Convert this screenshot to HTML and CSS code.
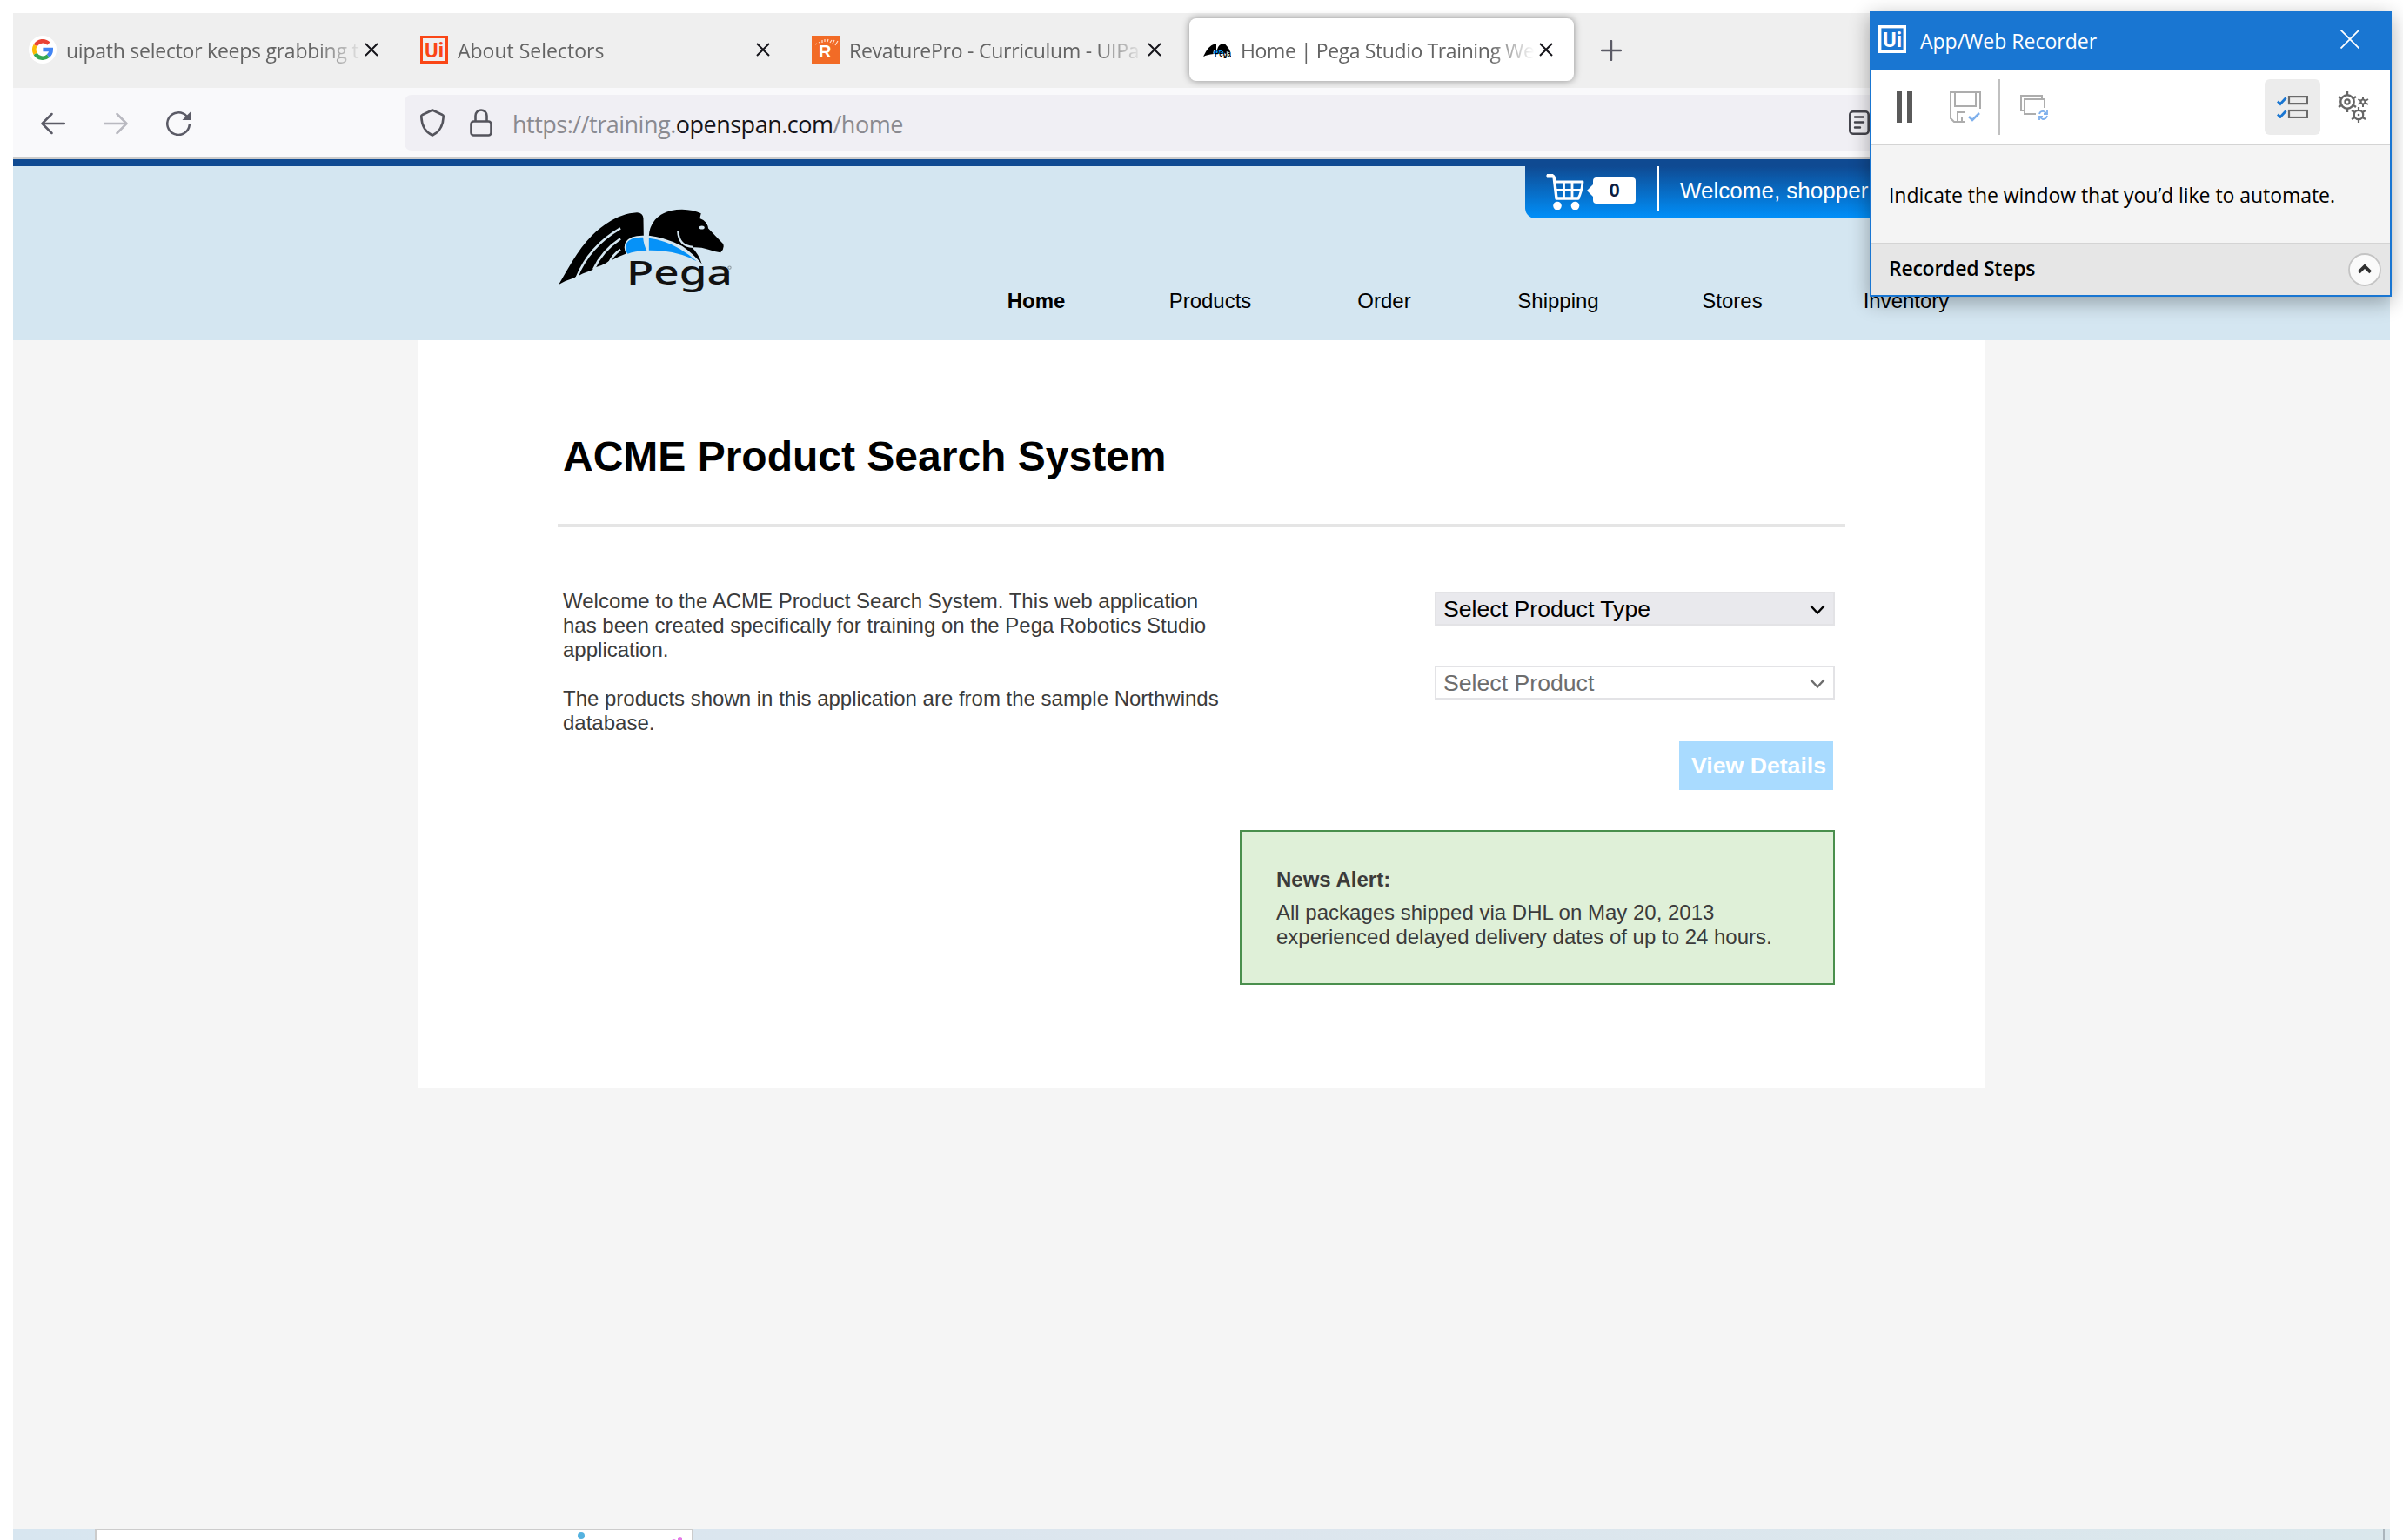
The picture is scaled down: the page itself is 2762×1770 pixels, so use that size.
FILE: index.html
```html
<!DOCTYPE html>
<html lang="en">
<head>
<meta charset="utf-8">
<title>Home | Pega Studio Training Website</title>
<link rel="stylesheet" href="styles.css">
</head>
<body>
<div class="screen">
  <svg class="defs" width="0" height="0" aria-hidden="true">
    <symbol id="pega-horse" viewBox="66 60 600 290">
      <path d="M66 320C98 268 128 205 180 152C228 104 282 76 335 73Q355 74 357 92L358 152Q312 151 296 174Q287 195 298 214Q275 222 250 236Q236 240 228 247Q212 256 195 260Q180 272 160 278Q148 282 137 289Q130 287 120 297Q90 306 66 320Z"/>
      <path d="M128 296Q170 190 278 127M186 268Q215 205 278 163M240 245Q252 218 278 200" fill="none" stroke="#d4e6f1" stroke-width="8"/>
      <path d="M376 152C378 108 412 62 490 62Q530 63 555 76L551 93Q577 102 580 127L631 180Q637 196 622 210Q602 208 580 200Q552 191 524 193Q546 213 558 250Q528 214 490 188Q432 158 376 152Z"/>
      <path d="M476 136Q478 188 528 191" fill="none" stroke="#d4e6f1" stroke-width="7"/>
      <ellipse cx="558" cy="124" rx="9" ry="6" fill="#d4e6f1"/>
      <path d="M356 158Q312 156 299 179Q291 200 303 215Q330 203 369 204Q358 185 356 158ZM376 161Q460 170 540 240Q470 202 376 203Z" fill="#0692f8"/>
    </symbol>
    <symbol id="close" viewBox="0 0 16 16"><path d="M1 1 15 15M15 1 1 15" fill="none" stroke="#15141a" stroke-width="2"/></symbol>
  </svg>

  <div class="browser">
    <div class="tabs">
      <div class="tab">
        <svg class="favicon" viewBox="0 0 32 32"><circle cx="16" cy="16" r="16" fill="#fff"/><g fill="none" stroke-width="4.6"><path d="M22.9 9.1A9.7 9.7 0 0 0 7.6 11.2" stroke="#ea4335"/><path d="M7.6 11.2A9.7 9.7 0 0 0 7.6 20.8" stroke="#fbbc05"/><path d="M7.6 20.8A9.7 9.7 0 0 0 22.4 23.3" stroke="#34a853"/><path d="M22.4 23.3A9.7 9.7 0 0 0 25.7 16H16.4" stroke="#4285f4"/></g></svg>
        <span class="tab-title t1">uipath selector keeps grabbing t</span>
        <svg class="tab-close"><use href="#close"/></svg>
      </div>
      <div class="tab">
        <svg class="favicon" viewBox="0 0 32 32"><rect x="1.5" y="1.5" width="29" height="29" fill="none" stroke="#fa4616" stroke-width="3"/><text x="5" y="24.5" class="ui-mark" textLength="22" lengthAdjust="spacingAndGlyphs" fill="#fa4616">Ui</text></svg>
        <span class="tab-title t2">About Selectors</span>
        <svg class="tab-close"><use href="#close"/></svg>
      </div>
      <div class="tab">
        <svg class="favicon" viewBox="0 0 32 32"><rect width="32" height="32" fill="#f26b26"/><path d="M4 10 6 9M8 8l2-1M12 8V5M15 7V4M18 7l1-3M21 8l2-3M24 9l2-4M27 11l3-5" stroke="#ffe2cf" stroke-width="1.2"/><text x="8" y="25" class="r-mark" fill="#fff">R</text></svg>
        <span class="tab-title t3">RevaturePro - Curriculum - UIPa</span>
        <svg class="tab-close"><use href="#close"/></svg>
      </div>
      <div class="tab active">
        <svg class="favicon" viewBox="0 0 32 32"><path d="M0 24Q6 11 13 9.500L15 10V16L12 17Q11 20 12 21Q4 22 0 24ZM16 16Q18 8 25 9.500Q31 16 31 19L26 18V21Q22 17 16 16Z"/><path d="M12 21Q11 17 15 16Q22 16 25 21Z" fill="#0692f8"/><text x="13" y="23.500" class="pega-mini" textLength="19" lengthAdjust="spacingAndGlyphs">Pega</text></svg>
        <span class="tab-title t4">Home | Pega Studio Training We</span>
        <svg class="tab-close"><use href="#close"/></svg>
      </div>
      <svg class="new-tab" viewBox="0 0 24 24"><path d="M12 1V23M1 12H23" fill="none" stroke="#5b5b66" stroke-width="2.4" stroke-linecap="round"/></svg>
    </div>

    <div class="toolbar">
      <div class="nav-buttons">
        <svg viewBox="0 0 28 28"><path d="M27 14H2M12.500 3 1.500 14 12.500 25" fill="none" stroke="#5b5b66" stroke-width="2.500" stroke-linecap="round" stroke-linejoin="round"/></svg>
        <svg viewBox="0 0 28 28"><path d="M1 14H26M15.500 3 26.500 14 15.500 25" fill="none" stroke="#b9b9c0" stroke-width="2.500" stroke-linecap="round" stroke-linejoin="round"/></svg>
        <svg viewBox="0 0 28 28"><path d="M23.500 5.500A12.800 12.800 0 1 0 26.800 15.500" fill="none" stroke="#5b5b66" stroke-width="2.500" stroke-linecap="round"/><path d="M28 0.500V10H18.500Z" fill="#5b5b66"/></svg>
      </div>
      <div class="urlbar">
        <svg class="shield" viewBox="0 0 28 32"><path d="M14 1.500 25.500 7Q27 7.500 26.700 9.500Q26 25 14 30.500Q2 25 1.300 9.500Q1 7.500 2.500 7Z" fill="none" stroke="#54545c" stroke-width="2.600" stroke-linejoin="round"/></svg>
        <svg class="lock" viewBox="0 0 26 32"><path d="M6.500 14V8a6.500 6.500 0 0 1 13 0V14" fill="none" stroke="#54545c" stroke-width="2.600"/><rect x="1.500" y="14.500" width="23" height="16" rx="3" fill="none" stroke="#54545c" stroke-width="2.600"/></svg>
        <span class="url">https://training.<b>openspan.com</b>/home</span>
        <svg class="reader" viewBox="0 0 24 28"><rect x="1.300" y="1.300" width="21.400" height="25.400" rx="3.500" fill="none" stroke="#45454d" stroke-width="2.600"/><path d="M7 7.500H17M7 13.500H17M7 19.500H13" stroke="#45454d" stroke-width="2.400" stroke-linecap="round"/></svg>
      </div>
    </div>

    <header class="site-header">
      <svg class="logo" viewBox="66 60 600 290">
        <use href="#pega-horse" x="66" y="60" width="600" height="290"/>
        <text x="299" y="321" class="pega-word" textLength="364" lengthAdjust="spacingAndGlyphs">Pega</text>
        <circle cx="653" cy="262" r="5" fill="none" stroke="#8b979e" stroke-width="3"/>
      </svg>
      <div class="header-main">
        <div class="account">
          <svg class="cart" viewBox="0 0 44 42"><path d="M2 3H7Q9 3 9.300 6L12 29H37" fill="none" stroke="#fff" stroke-width="3.400" stroke-linecap="round" stroke-linejoin="round"/><path d="M1 1H8V5.500H1Z" fill="#fff"/><path d="M10 10H42Q41 22 37 29M11 19.500H40M20.500 10V29M30 10V29" fill="none" stroke="#fff" stroke-width="2.800" stroke-linejoin="round"/><circle cx="13" cy="37.500" r="4.800" fill="#fff"/><circle cx="33.500" cy="37.500" r="4.800" fill="#fff"/></svg>
          <div class="count"><i></i><span>0</span></div>
          <div class="welcome">Welcome, shopper</div>
        </div>
        <nav class="menu"><a class="current">Home</a><a>Products</a><a>Order</a><a>Shipping</a><a>Stores</a><a>Inventory</a></nav>
      </div>
    </header>

    <main class="page">
      <h1>ACME Product Search System</h1>
      <div class="columns">
        <div class="intro">
          <p>Welcome to the ACME Product Search System. This web application<br>has been created specifically for training on the Pega Robotics Studio<br>application.</p>
          <p>The products shown in this application are from the sample Northwinds<br>database.</p>
        </div>
        <div class="search">
          <div class="select"><span>Select Product Type</span><svg viewBox="0 0 18 12"><path d="M1.500 1.500 9 9.500 16.500 1.500" fill="none" stroke="#000" stroke-width="2.500"/></svg></div>
          <div class="select disabled"><span>Select Product</span><svg viewBox="0 0 18 12"><path d="M1.500 1.500 9 9.500 16.500 1.500" fill="none" stroke="#6d6d6d" stroke-width="2.500"/></svg></div>
          <div class="details">View Details</div>
          <div class="alert"><strong>News Alert:</strong>All packages shipped via DHL on May 20, 2013<br>experienced delayed delivery dates of up to 24 hours.</div>
        </div>
      </div>
    </main>

    <div class="strip">
      <div class="strip-card"><i class="drop"></i><svg class="spark" viewBox="0 0 12 3"><path d="M0 3 3 2 5 3ZM7 3V1L10 0 12 1V3Z" fill="#e57be8"/></svg></div>
      <i class="strip-line"></i>
    </div>
  </div>

  <section class="recorder">
    <div class="rec-title">
      <svg class="rec-logo" viewBox="0 0 32 32"><rect x="1.700" y="1.700" width="28.600" height="28.600" fill="none" stroke="#fff" stroke-width="3.400"/><text x="5" y="24.500" class="ui-mark" textLength="22" lengthAdjust="spacingAndGlyphs" fill="#fff">Ui</text></svg>
      <span>App/Web Recorder</span>
      <svg class="rec-close" viewBox="0 0 22 22"><path d="M.5.500 21.500 21.500M21.500.500.500 21.500" stroke="#fff" stroke-width="1.800"/></svg>
    </div>
    <div class="rec-tools">
      <svg class="pause" viewBox="0 0 18 36"><path d="M0 0H6V36H0ZM12 0H18V36H12Z" fill="#5a5a5a"/></svg>
      <svg class="save" viewBox="0 0 36 36"><g fill="none" stroke="#adadad" stroke-width="2"><path d="M35 20V1H1V31L5 35H18M6 1V17H30V1"/><path d="M9 35V24H18M14 35V29"/></g><path d="M22 29 26 33 34 25" fill="none" stroke="#7fb0ec" stroke-width="2.600"/></svg>
      <i class="rule"></i>
      <svg class="windows" viewBox="0 0 32 30"><g fill="none" stroke="#adadad" stroke-width="2"><path d="M5 18H1V1H25V5"/><path d="M18 22H5V5H28V15"/></g><g fill="none" stroke="#7fb0ec" stroke-width="1.800"><path d="M22 22Q23 18.500 27 19L30 21M31 24Q30 28 26 28L23 26"/><path d="M31 17.500V22H27M22 29V25H26"/></g></svg>
      <div class="toggle"><svg viewBox="0 0 36 26"><g fill="none" stroke="#6a6a6a" stroke-width="2.200"><rect x="14" y="1.100" width="21" height="8"/><rect x="14" y="17" width="21" height="8"/></g><path d="M1 6.500 4 9.500 10.500 2.500M1 21.500 4 24.500 10.500 17.500" fill="none" stroke="#1976d2" stroke-width="2.800"/></svg></div>
      <svg class="gears" viewBox="0 0 36 36"><g fill="none" stroke="#666"><circle cx="11" cy="12" r="7.700" stroke-width="2.400"/><circle cx="11" cy="12" r="2.600" stroke-width="2.200"/><path d="M11 0V4M11 20V24M1 6 4 8M18 16 21 18M1 18 4 16M18 8 21 6" stroke-width="2.400"/><circle cx="24" cy="27" r="5.200" stroke-width="2.200"/><path d="M24 18V21M24 33V36M16 22 19.500 24M28.500 30 32 32M16 32 19.500 30M28.500 24 32 22" stroke-width="2.200"/><circle cx="29" cy="12" r="2.400" stroke-width="2"/><path d="M29 6V9M29 15V18M23.500 9 26.500 11M31.500 13 35 15M23.500 15 26.500 13M31.500 11 35 9" stroke-width="2"/></g><circle cx="24" cy="27" r="1.300" fill="#666"/></svg>
    </div>
    <div class="rec-body"><span>Indicate the window that you’d like to automate.</span></div>
    <div class="rec-foot"><span>Recorded Steps</span><svg viewBox="0 0 38 38"><circle cx="19" cy="19" r="18" fill="#fafafa" stroke="#c4c4c4" stroke-width="1.800"/><path d="M12.300 21.800 19 15.200 25.700 21.800" fill="none" stroke="#303030" stroke-width="4"/></svg></div>
  </section>
</div>
</body>
</html>
```
FILE: styles.css
```css
* { box-sizing: border-box; }
body { margin: 0; background: #fff; }
svg { display: block; flex: none; }
.defs { position: absolute; }
.screen {
  position: relative;
  width: 2762px;
  height: 1770px;
  padding: 15px 15px 0;
  overflow: hidden;
  font-family: "Liberation Sans", Arial, sans-serif;
  font-size: 24px;
  color: #3b3b3b;
}
.browser {
  display: flex;
  flex-direction: column;
  width: 2732px;
  height: 1755px;
  background: #f5f5f5;
}

/* tab strip */
.tabs {
  display: flex;
  align-items: flex-start;
  height: 86px;
  padding: 6px 0 0 2px;
  background: #efefef;
  font-family: "Open Sans", "Noto Sans", sans-serif;
  font-size: 23px;
}
.tab {
  display: flex;
  align-items: center;
  width: 442px;
  height: 72px;
  margin-right: 8px;
  padding-left: 16px;
  border-radius: 8px;
}
.active { background: #fff; box-shadow: 0 0 8px rgba(0, 0, 0, .42); }
.favicon { width: 32px; height: 32px; }
.tab-title {
  width: 339px;
  margin: 2px 4px 0 11px;
  line-height: 40px;
  white-space: nowrap;
  color: #646464;
  letter-spacing: -.25px;
  -webkit-mask-image: linear-gradient(90deg, #000 285px, transparent 338px);
  mask-image: linear-gradient(90deg, #000 285px, transparent 338px);
}
.t1 {
  -webkit-mask-image: linear-gradient(90deg, #000 285px, transparent 342px);
  mask-image: linear-gradient(90deg, #000 285px, transparent 342px);
}
.t2 { letter-spacing: 0; }
.t4 { letter-spacing: -.4px; }
.tab-close { width: 16px; height: 16px; }
.new-tab { width: 24px; height: 24px; margin: 25px 0 0 23px; }
.ui-mark { font: bold 23px Roboto, sans-serif; }
.r-mark { font: bold 20px "Liberation Sans", sans-serif; }
.pega-mini { font: bold 10px "Liberation Sans", sans-serif; }

/* navigation toolbar */
.toolbar {
  display: flex;
  height: 82px;
  padding: 8px 0 8px 32px;
  background: #f9f9fb;
  border-bottom: 2px solid #ccc;
}
.nav-buttons { display: flex; gap: 44px; width: 418px; padding-top: 19px; }
.nav-buttons svg { width: 28px; height: 28px; }
.urlbar {
  display: flex;
  align-items: center;
  flex: 1;
  padding-left: 18px;
  background: #f0eff4;
  border-radius: 8px;
}
.shield { width: 28px; height: 32px; }
.lock { width: 26px; height: 32px; margin-left: 29px; }
.url {
  width: 1536px;
  margin-left: 23px;
  padding-top: 4px;
  font: 27px/40px "Open Sans", "Noto Sans", sans-serif;
  letter-spacing: -.5px;
  color: #8a8a90;
}
.url b { font-weight: 400; color: #15141a; }
.reader { width: 24px; height: 28px; }

/* site header */
.site-header {
  display: flex;
  height: 208px;
  padding-left: 627px;
  border-top: 8px solid #0f4a92;
  background: #d4e6f1;
}
.logo { width: 201px; height: 97px; margin: 49px 248px 0 0; }
.pega-word { font: 500 114px "Noto Sans", sans-serif; fill: #111; }
.header-main { width: 1200px; }
.account {
  display: flex;
  width: 528px;
  height: 60px;
  margin-left: 662px;
  padding-left: 24px;
  border-radius: 0 0 12px 12px;
  background: linear-gradient(#0f4a92, #0090fa);
}
.cart { width: 44px; height: 42px; margin-top: 8px; }
.count {
  display: flex;
  align-items: center;
  width: 86px;
  height: 52px;
  padding: 4px 0 0 3px;
  border-right: 2px solid #fff;
}
.count i { border: 7px solid transparent; border-left: 0; border-right-color: #fff; }
.count span {
  width: 49px;
  border-radius: 4px;
  background: #fff;
  font: bold 22px/30px "Liberation Sans", sans-serif;
  color: #0c1c40;
  text-align: center;
}
.welcome { padding-left: 24px; font-size: 26px; line-height: 56px; color: #fff; }
.menu { display: flex; margin-top: 79px; line-height: 32px; color: #000; }
.menu a { width: 200px; text-align: center; }
.menu .current { font-weight: 700; }

/* page */
.page {
  width: 1800px;
  height: 860px;
  margin-left: 466px;
  padding: 101px 160px 0;
  background: #fff;
}
h1 {
  height: 114px;
  margin: 0;
  padding: 1px 0 0 6px;
  border-bottom: 4px solid #e5e5e5;
  font-size: 48px;
  line-height: 64px;
  color: #000;
}
.columns { display: flex; }
.intro { width: 784px; padding: 71px 0 0 6px; line-height: 28px; white-space: nowrap; }
.intro p { margin: 0 0 28px; }
.search { display: flex; flex-direction: column; align-items: flex-end; width: 684px; padding-top: 74px; }
.select {
  display: flex;
  align-items: center;
  justify-content: space-between;
  width: 460px;
  height: 39px;
  margin-bottom: 46px;
  padding: 0 9px 0 8px;
  border: 2px solid #e3e3e6;
  background: #e9e9ed;
  font-size: 26.667px;
  color: #000;
}
.select span { padding-top: 2px; }
.select svg { width: 18px; height: 12px; margin-top: 2px; }
.disabled { margin-bottom: 48px; background: #fff; color: #6d6d6d; }
.details {
  width: 177px;
  height: 56px;
  margin-right: 2px;
  padding-left: 14px;
  background: #a9dbff;
  font-size: 26.667px;
  font-weight: 700;
  line-height: 56px;
  color: #fff;
  white-space: nowrap;
}
.alert {
  width: 684px;
  height: 178px;
  margin-top: 46px;
  padding: 41px 0 0 40px;
  border: 2px solid #4a8f4d;
  background: #dff0d8;
  line-height: 28px;
}
.alert strong { display: block; margin-bottom: 10px; }

/* clipped strip below the page */
.strip { display: flex; height: 13px; margin-top: 506px; padding-left: 94px; background: linear-gradient(90deg, #d8e6f0, #dde6ee 50%, #dae7ec); }
.strip-card { display: flex; align-items: flex-start; width: 688px; height: 13px; padding: 2px 0 0 553px; border: 2px solid #ccc; border-bottom: 0; background: #fff; }
.drop { width: 8px; height: 8px; border-radius: 50%; background: #55b2df; }
.spark { width: 12px; height: 3px; margin: 6px 0 0 100px; }
.strip-line { width: 2px; height: 13px; margin-left: 1942px; background: #abb5bc; }

/* floating recorder window */
.recorder {
  position: absolute;
  left: 2149px;
  top: 13px;
  width: 600px;
  height: 328px;
  border: 2px solid #1976d2;
  background: #f4f4f4;
  box-shadow: 0 6px 22px rgba(0, 0, 0, .32);
  font: 23px/40px "Open Sans", "Noto Sans", sans-serif;
  color: #000;
  white-space: nowrap;
}
.rec-title { display: flex; height: 66px; padding: 14px 0 0 8px; background: #1976d2; color: #fff; }
.rec-logo { width: 32px; height: 32px; }
.rec-title span { width: 483px; margin: -2px 0 0 16px; letter-spacing: 0; }
.rec-close { width: 22px; height: 22px; margin-top: 5px; }
.rec-tools { display: flex; height: 86px; padding: 10px 0 0 29px; border-bottom: 2px solid #d4d4d4; background: #fff; }
.pause { width: 18px; height: 36px; margin-top: 14px; }
.save { width: 36px; height: 36px; margin: 14px 0 0 43px; }
.rule { width: 2px; height: 64px; margin-left: 20px; background: #c0c0c0; }
.windows { width: 32px; height: 30px; margin: 18px 0 0 23px; }
.toggle { width: 64px; height: 64px; margin-left: 249px; padding: 19px 14px; border-radius: 6px; background: #ececec; }
.toggle svg { width: 36px; height: 26px; }
.gears { width: 36px; height: 36px; margin: 14px 0 0 20px; }
.rec-body { height: 114px; padding: 37px 0 0 20px; border-bottom: 2px solid #d4d4d4; letter-spacing: -.05px; }
.rec-foot { display: flex; justify-content: space-between; height: 58px; padding: 7px 10px 0 20px; background: #e6e6e6; font-weight: 600; letter-spacing: -.25px; }
.rec-foot svg { width: 38px; height: 38px; margin-top: 3px; }
```
